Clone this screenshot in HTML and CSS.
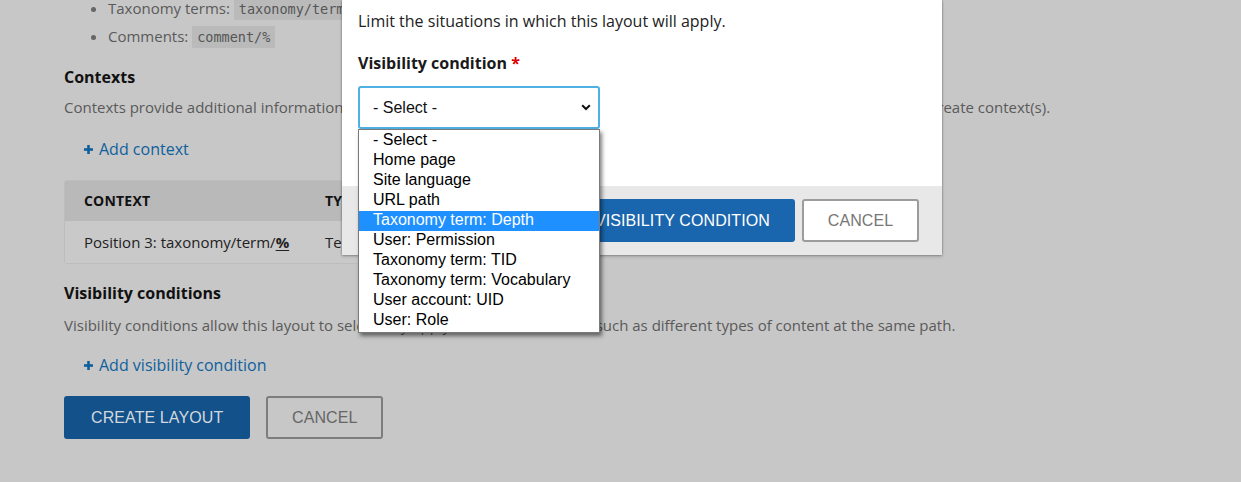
FILE: index.html
```html
<!DOCTYPE html>
<html>
<head>
<meta charset="utf-8">
<link rel="stylesheet" href="styles.css">
</head>
<body>
<div class="page">
  <ul class="paths">
    <li>Taxonomy terms: <code>taxonomy/term/%</code></li>
    <li>Comments: <code>comment/%</code></li>
  </ul>

  <h3 class="sec-title first">Contexts</h3>
  <p class="desc">Contexts provide additional information to the layout. Some are provided automatically from a path, here you can manually create context(s).</p>
  <a class="add-link" href="#"><svg class="plus" width="9" height="9" viewBox="0 0 9 9"><rect x="3.2" y="0" width="2.6" height="9" fill="currentColor"/><rect x="0" y="3.2" width="9" height="2.6" fill="currentColor"/></svg>Add context</a>

  <table class="ctx-table">
    <thead>
      <tr><th class="c1">Context</th><th>Type</th></tr>
    </thead>
    <tbody>
      <tr><td class="c1">Position 3: taxonomy/term/<strong>%</strong></td><td>Term</td></tr>
    </tbody>
  </table>

  <h3 class="sec-title">Visibility conditions</h3>
  <p class="desc">Visibility conditions allow this layout to selectively apply to varied situations, such as different types of content at the same path.</p>
  <a class="add-link" href="#"><svg class="plus" width="9" height="9" viewBox="0 0 9 9"><rect x="3.2" y="0" width="2.6" height="9" fill="currentColor"/><rect x="0" y="3.2" width="9" height="2.6" fill="currentColor"/></svg>Add visibility condition</a>

  <div class="actions">
    <button class="btn btn-primary dim">Create layout</button>
    <button class="btn btn-secondary dim">Cancel</button>
  </div>
</div>

<div class="modal">
  <div class="modal-body">
    <p class="modal-intro">Limit the situations in which this layout will apply.</p>
    <label class="field-label">Visibility condition <span class="req">*</span></label>
    <div class="select">
      <span>- Select -</span>
      <svg class="chev" width="10" height="7" viewBox="0 0 10 7"><path d="M1.2 1.2 L5 5 L8.8 1.2" fill="none" stroke="#111" stroke-width="2"/></svg>
    </div>
  </div>
  <div class="modal-footer">
    <button class="btn btn-primary">Add visibility condition</button>
    <button class="btn btn-secondary">Cancel</button>
  </div>
</div>

<ul class="dropdown">
  <li>- Select -</li>
  <li>Home page</li>
  <li>Site language</li>
  <li>URL path</li>
  <li class="hl">Taxonomy term: Depth</li>
  <li>User: Permission</li>
  <li>Taxonomy term: TID</li>
  <li>Taxonomy term: Vocabulary</li>
  <li>User account: UID</li>
  <li>User: Role</li>
</ul>
</body>
</html>
```

FILE: styles.css
```css
html, body {
  margin: 0;
  padding: 0;
}
body {
  background: #c7c7c7;
  font-family: "Open Sans", "Liberation Sans", sans-serif;
  color: #222;
  width: 1241px;
  height: 482px;
  overflow: hidden;
  position: relative;
}
.page {
  padding-left: 64px;
  margin-top: -6px;
}
.paths {
  margin: 0;
  padding-left: 44px;
  font-size: 15px;
  color: #5a5a5a;
}
.paths li {
  height: 28px;
  line-height: 28px;
}
.paths li::marker {
  color: #666;
}
.paths code {
  font-family: "DejaVu Sans Mono", monospace;
  font-size: 13.5px;
  background: #bababa;
  color: #555;
  padding: 3px 5px;
}
.sec-title {
  margin: 15px 0 0;
  font-size: 16px;
  line-height: 24px;
  font-weight: 700;
  color: #111;
}
.desc {
  margin: 7px 0 0;
  font-size: 15px;
  line-height: 22px;
  color: #5a5a5a;
  white-space: nowrap;
}
.add-link {
  display: flex;
  align-items: center;
  gap: 6px;
  margin: 20px 0 0 20px;
  font-size: 16px;
  line-height: 22px;
  color: #0f5f9e;
  text-decoration: none;
  width: max-content;
}
.plus {
  display: block;
}
.ctx-table {
  margin-top: 20px;
  width: 536px;
  border-collapse: separate;
  border-spacing: 0;
  border: 1px solid #bdbdbd;
  border-radius: 3px;
  font-size: 15px;
}
.ctx-table th {
  background: #b9b9b9;
  text-align: left;
  text-transform: uppercase;
  font-size: 14px;
  font-weight: 700;
  color: #111;
  height: 40px;
  padding: 0 0 0 19px;
  letter-spacing: 0.2px;
  line-height: 18px;
  vertical-align: middle;
}
.ctx-table th.c1, .ctx-table td.c1 {
  width: 222px;
}
.ctx-table td {
  background: #c9c9c9;
  height: 42px;
  padding: 0 0 0 19px;
  color: #222;
}
.ctx-table td strong {
  text-decoration: underline;
  text-underline-offset: 2px;
}
.ctx-table + .sec-title {
  margin-top: 17px;
}
.ctx-table ~ .desc {
  margin-top: 9px;
}
.ctx-table ~ .add-link {
  margin-top: 18px;
}
.actions {
  display: flex;
  gap: 16px;
  margin-top: 20px;
}
.btn {
  font-family: "Liberation Sans", Arial, sans-serif;
  font-size: 16px;
  text-transform: uppercase;
  height: 43px;
  border-radius: 3px;
  cursor: pointer;
  letter-spacing: 0.1px;
}
.btn-primary {
  background: #1a66ae;
  color: #fff;
  border: none;
  padding: 0 25px;
}
.btn-secondary {
  background: #fff;
  color: #767676;
  border: 2px solid #9c9c9c;
  padding: 0 23px;
  width: 117px;
}
.btn-primary.dim {
  background: #125189;
  color: #d3d8de;
  padding: 0 27px;
}
.btn-secondary.dim {
  background: #c7c7c7;
  color: #666;
  border-color: #7d7d7d;
}
.modal {
  position: absolute;
  left: 342px;
  top: 0;
  width: 600px;
  background: #fff;
  box-shadow: 0 0 2px rgba(0, 0, 0, 0.45), 0 2px 3px rgba(0,0,0,0.15);
}
.modal-body {
  padding: 9px 16px 0;
  height: 177px;
}
.modal-intro {
  margin: 0;
  font-size: 16px;
  line-height: 24px;
  color: #222;
}
.field-label {
  display: block;
  margin-top: 18px;
  font-size: 16px;
  line-height: 24px;
  font-weight: 700;
  color: #1a1a1a;
}
.req {
  color: #e00000;
}
.select {
  margin-top: 11px;
  height: 39px;
  border: 2px solid #4fb0e4;
  border-radius: 3px;
  display: flex;
  align-items: center;
  justify-content: space-between;
  padding: 0 7px 0 13px;
  box-sizing: content-box;
  width: 218px;
  font-family: "Liberation Sans", Arial, sans-serif;
  font-size: 16px;
  color: #111;
}
.chev {
  display: block;
}
.modal-footer {
  background: #e8e8e8;
  height: 69px;
  display: flex;
  justify-content: flex-end;
  align-items: flex-start;
  gap: 7px;
  padding: 13px 23px 0 0;
  box-sizing: border-box;
}
.dropdown {
  position: absolute;
  left: 358px;
  top: 129px;
  width: 240px;
  margin: 0;
  padding: 1px 0 1px;
  list-style: none;
  background: #fff;
  border: 1px solid #7a7a7a;
  box-shadow: 2px 3px 4px rgba(0, 0, 0, 0.5);
  font-family: "Liberation Sans", Arial, sans-serif;
  font-size: 16px;
  color: #000;
}
.dropdown li {
  height: 20px;
  line-height: 17px;
  padding-left: 14px;
}
.dropdown li.hl {
  background: #1e90ff;
  color: #fff;
}
```
